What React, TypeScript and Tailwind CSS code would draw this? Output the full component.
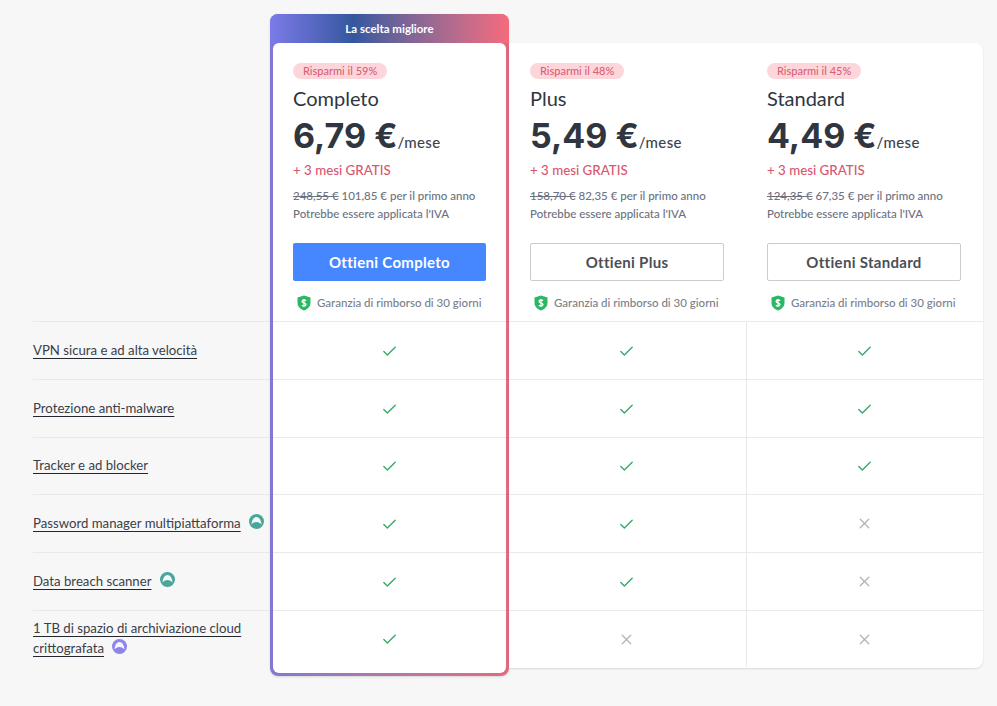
import { Check, X } from "lucide-react";

const plans = [
  { name: "Completo", save: "59", price: "6,79", old: "248,55 €", now: "101,85 €", top: true },
  { name: "Plus", save: "48", price: "5,49", old: "158,70 €", now: "82,35 €", top: false },
  { name: "Standard", save: "45", price: "4,49", old: "124,35 €", now: "67,35 €", top: false },
];

const rows = [
  { label: "VPN sicura e ad alta velocità", badge: "", h: "h-[58px]", has: [true, true, true] },
  { label: "Protezione anti-malware", badge: "", h: "h-[58px]", has: [true, true, true] },
  { label: "Tracker e ad blocker", badge: "", h: "h-[57px]", has: [true, true, true] },
  { label: "Password manager multipiattaforma", badge: "teal", h: "h-[58px]", has: [true, true, false] },
  { label: "Data breach scanner", badge: "teal", h: "h-[58px]", has: [true, true, false] },
  { label: "1 TB di spazio di archiviazione cloud crittografata", badge: "violet", h: "h-[57px]", has: [true, false, false] },
];

function Shield() {
  return (
    <svg width="14" height="16" viewBox="0 0 14 16" className="shrink-0">
      <path d="M7 .5 13.5 2.5V8c0 3.6-2.8 6.2-6.5 7.5C3.300 14.200.5 11.600.5 8V2.500Z" fill="#2cb765" />
      <path d="M7 4v8M9 5.800C8.500 5.200 7.800 5 7 5 5.900 5 5.100 5.500 5.100 6.400 5.100 8.200 9 7.400 9 9.500 9 10.400 8.100 11 7 11 6.100 11 5.300 10.700 4.900 10.100" fill="none" stroke="#fff" strokeWidth="1.300" />
    </svg>
  );
}

function Badge({ color }: { color: string }) {
  const fill = color === "teal" ? "#4aa59b" : "#8b85ec";
  return (
    <svg width="15" height="15" viewBox="0 0 15 15" className="relative -top-[3px] ml-2 inline-block align-middle">
      <circle cx="7.500" cy="7.500" r="7.500" fill={fill} />
      <path d="M2.500 10.500C2.800 6 4.800 3 7.500 3S12.200 6 12.500 10.500C11.300 8.800 9.500 7.900 7.500 7.900S3.700 8.800 2.500 10.500Z" fill="#fff" opacity="0.92" />
    </svg>
  );
}

function PlanHead({ plan }: { plan: (typeof plans)[number] }) {
  return (
    <div className="flex h-[278px] flex-col items-start pt-5">
      <span className="flex h-4 items-center rounded-full bg-[#fdd6dc] px-[10px] text-[11px] font-medium text-[#dc5f76]">
        Risparmi il {plan.save}%
      </span>
      <h2 className="mt-[7px] text-[20px] leading-6 font-normal text-[#2f3640]">{plan.name}</h2>
      <div className="mt-[6px] flex h-[40px] items-baseline text-[#2f3640]">
        <span className="font-['Inter',sans-serif] text-[34px] leading-[40px] font-bold">{plan.price} €</span>
        <span className="text-[15px] font-medium tracking-[0.4px] text-[#3d434c]">/mese</span>
      </div>
      <p className="mt-[4px] text-[13.3px] leading-5 font-medium text-[#d9566f]">+ 3 mesi GRATIS</p>
      <p className="mt-[7px] text-[11.5px] leading-[18px] font-medium text-[#6c7280]">
        <span className="line-through">{plan.old}</span> {plan.now} per il primo anno
      </p>
      <p className="text-[11.5px] leading-[18px] font-medium text-[#6c7280]">Potrebbe essere applicata l'IVA</p>
      <button
        className={
          plan.top
            ? "mt-5 h-[38px] w-[193px] rounded-[2px] bg-[#4687ff] text-[15px] font-bold tracking-[0.3px] text-white"
            : "mt-5 h-[38px] w-[194px] rounded-[2px] border border-[#c9ccd1] bg-white text-[15px] font-bold tracking-[0.3px] text-[#4a4f57]"
        }
      >
        Ottieni {plan.name}
      </button>
      <div className="mt-[13px] flex items-center gap-[6px] self-stretch pl-1 text-[11.5px] font-medium text-[#7a808a]">
        <Shield />
        Garanzia di rimborso di 30 giorni
      </div>
    </div>
  );
}

function Cell({ on, h, divider, plain }: { on: boolean; h: string; divider?: boolean; plain?: boolean }) {
  return (
    <div className={`flex items-center justify-center border-t border-[#e9e9ec] ${h} ${divider ? "border-l" : ""} ${plain ? "pr-[2px]" : ""}`}>
      {on ? (
        <Check size={17} strokeWidth={2} className="mt-[1px] text-[#3aa96b]" />
      ) : (
        <X size={17} strokeWidth={1.900} className="text-[#b5b5b8]" />
      )}
    </div>
  );
}

export default function App() {
  return (
    <div className="flex min-h-screen bg-[#f7f7f8] pt-[14px] pl-[33px] font-['Lato',sans-serif]">
      <div className="w-[237px] pt-[307px]">
        {rows.map((r) => (
          <div key={r.label} className={`flex items-center border-t border-[#e9e9ec] pb-[2px] ${r.h}`}>
            <p className="text-[13.2px] leading-5 text-[#3b4048]">
              <span className="underline decoration-[#23282f] underline-offset-[3px] [text-decoration-skip-ink:none]">
                {r.label}
              </span>
              {r.badge && <Badge color={r.badge} />}
            </p>
          </div>
        ))}
      </div>

      <div className="h-[662px] w-[239px] rounded-lg bg-gradient-to-r from-[#8079d2] to-[#e5677f] shadow-sm">
        <div className="flex h-[29px] items-center justify-center rounded-t-lg bg-gradient-to-r from-[#7c7be9] via-[#33579f] via-35% to-[#f66a7c] text-[11.5px] font-bold text-white">
          La scelta migliore
        </div>
        <div className="mx-[3px] h-[630px] overflow-hidden rounded-md bg-white">
          <div className="pl-5">
            <PlanHead plan={plans[0]} />
          </div>
          {rows.map((r) => (
            <Cell key={r.label} on={r.has[0]} h={r.h} />
          ))}
        </div>
      </div>

      <div className="mt-[29px] grid h-[625px] w-[474px] grid-cols-2 rounded-r-lg bg-white shadow-[0_1px_2px_rgba(0,0,0,0.12)]">
        {[1, 2].map((i) => (
          <div key={i}>
            <div className="pl-[21px]">
              <PlanHead plan={plans[i]} />
            </div>
            {rows.map((r) => (
              <Cell key={r.label} on={r.has[i]} h={r.h} divider={i === 2} plain />
            ))}
          </div>
        ))}
      </div>
    </div>
  );
}
